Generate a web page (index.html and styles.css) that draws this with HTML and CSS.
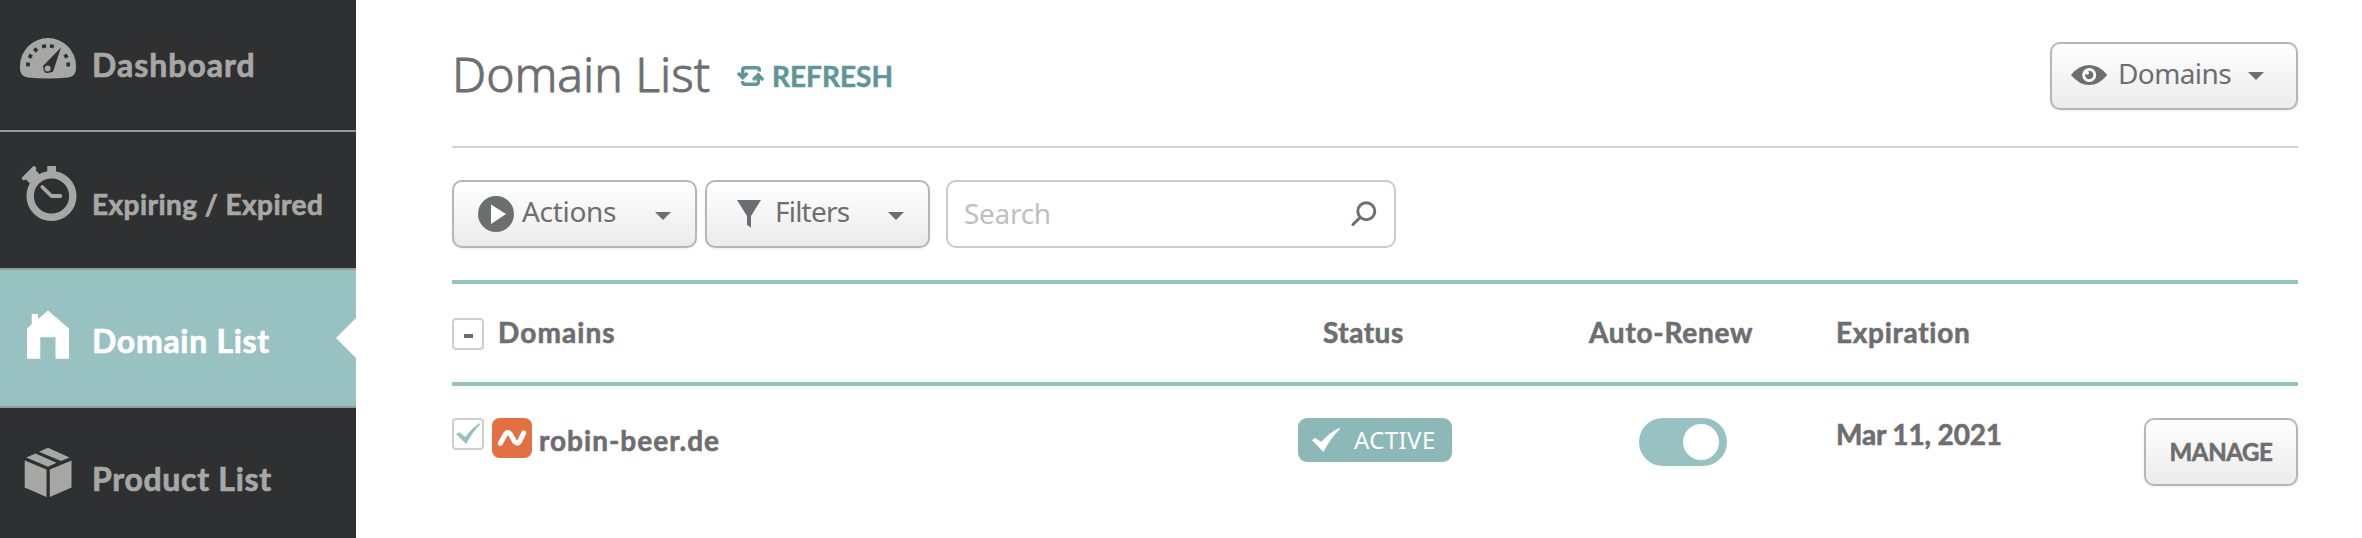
FILE: index.html
```html
<!DOCTYPE html>
<html lang="en">
<head>
<meta charset="utf-8">
<title>Domain List</title>
<link rel="stylesheet" href="styles.css">
</head>
<body>
<div class="app">
  <nav class="sidebar">
    <a class="nav-item nav-first">
      <svg class="nav-icon" width="92" height="130" viewBox="0 0 92 130">
        <path fill="#a7a8a6" d="M20 66a28 28 0 0 1 56 0v3q0 7-8 8.500q-20 2-40 0q-8-1.500-8-8.500z"/>
        <g fill="#2f3031">
          <path d="M26.300 62.200l3.700.5-.3 4-3.700-.6zM29.700 53.600l3.200 2-2 3.300-3.100-2zM35.500 47.300l3 2.700-2.900 2.700-2.600-2.900zM41.700 45l4-1 .7 3.500-4 1zM50.300 44l4 1-1.100 3.500-3.600-1zM63.300 55.600l3.100-2 2.300 3.200-3.200 2zM66.200 62.700l3.600-.5.400 4-3.600.5z"/>
          <path d="M61 47.500l-8 24.300q-3.500 1.500-8 1q-1.500-2-2-6.800z"/>
        </g>
        <circle cx="47.700" cy="68.500" r="2.900" fill="#a7a8a6"/>
      </svg>
      <span class="nav-label sp-10">Dashboard</span>
    </a>
    <a class="nav-item">
      <svg class="nav-icon" width="92" height="136" viewBox="0 132 92 136">
        <g fill="none" stroke="#a7a8a6">
          <circle cx="51.500" cy="196" r="21.300" stroke-width="7.400"/>
          <path stroke-width="3.800" stroke-linecap="round" stroke-linejoin="round" d="M42.300 187l9.200 9h8.800"/>
        </g>
        <path fill="#a7a8a6" d="M47.300 166H56v8h-8.700zM21.500 178l12.200-12.200 2.600 1.800-.5 2.700 4.400 4.700-9.400 9.400-4.800-4.800-2.700.8z"/>
      </svg>
      <span class="nav-label nav-small">Expiring / Expired</span>
    </a>
    <a class="nav-item nav-active">
      <svg class="nav-icon" width="92" height="136" viewBox="0 270 92 136">
        <path fill="#fff" d="M27 328.500l4.700-4.300V314H38v5l10-8.500 21 18v30.200H55.500v-21.400H40.300v21.400H27z"/>
      </svg>
      <span class="nav-label sp-7">Domain List</span>
    </a>
    <a class="nav-item">
      <svg class="nav-icon" width="92" height="136" viewBox="0 408 92 136">
        <path fill="#a7a8a6" d="M24.700 460.500l21.800 9V497l-21.800-9.500zM49.800 469.500l21.700-9v27L49.800 497zM26.300 457.500l9.200-4 21 9.200-8.500 4zM39 451.800l9-4 21.500 9.700-8.500 3.600z"/>
      </svg>
      <span class="nav-label sp-7">Product List</span>
    </a>
  </nav>

  <main class="main">
    <header class="page-head">
      <h1 class="title">Domain List</h1>
      <a class="refresh">
        <svg width="27" height="22" viewBox="737 65 27 22" fill="none" stroke="#5f9697" stroke-width="3.400">
          <path d="M742.700 77.500V70q0-2.300 2.300-2.300h12q2.300 0 2.300 2.300v1.500M738 73l4.700 4.700 4.800-4.700M742.700 81v1q0 2.300 2.300 2.300h11q2.300 0 2.300-2.300v-7.500M753.200 80l5.100-5.200 4.800 5.200"/>
        </svg>
        REFRESH
      </a>
      <button class="btn btn-view">
        <svg width="37" height="22" viewBox="2071 64 37 22">
          <path fill="#6d6e70" d="M2071 75q8-10 18.200-10t18 10q-8 10-18 10t-18.200-10z"/>
          <circle cx="2089.200" cy="75" r="7" fill="#fff"/>
          <circle cx="2089.200" cy="75" r="4.200" fill="#6d6e70"/>
          <circle cx="2087" cy="72.800" r="2" fill="#fff"/>
        </svg>
        <span class="btn-label lbl-domains">Domains</span>
        <i class="caret"></i>
      </button>
    </header>

    <div class="toolbar">
      <button class="btn btn-actions">
        <svg width="36" height="36" viewBox="0 0 36 36">
          <circle cx="18" cy="18" r="18" fill="#6d6e70"/>
          <path fill="#fff" d="M13 8.500l15 9.500-15 10z"/>
        </svg>
        <span class="btn-label lbl-actions">Actions</span>
        <i class="caret"></i>
      </button>
      <button class="btn btn-filters">
        <svg width="24" height="28" viewBox="0 0 24 28">
          <path fill="#6d6e70" d="M0 0h24L14 16v11.500L10 25v-9z"/>
        </svg>
        <span class="btn-label lbl-filters">Filters</span>
        <i class="caret"></i>
      </button>
      <div class="search">
        <span class="search-hint">Search</span>
        <svg width="26" height="26" viewBox="0 0 26 26" fill="none" stroke="#6d6e70">
          <circle cx="15.300" cy="10.300" r="8.500" stroke-width="3"/>
          <path d="M8.800 16.800L2 23.500" stroke-width="3" stroke-linecap="round"/>
        </svg>
      </div>
    </div>

    <section class="table">
      <div class="row thead">
        <div class="cell-name"><span class="check check-mixed"><i class="dash"></i></span><span class="th-domains">Domains</span></div>
        <div class="th-status">Status</div>
        <div class="th-renew">Auto-Renew</div>
        <div class="th-exp">Expiration</div>
      </div>
      <div class="row tbody">
        <div class="cell-name">
          <span class="check">
            <svg width="28" height="28" viewBox="454 420 28 28"><path fill="#98c1c1" d="M456 434l3.300-1.800 6 4.800q6.500-9 14.500-13.700l.6.900q-7.500 7.300-14.200 19.800z"/></svg>
          </span>
          <svg class="logo" width="40" height="40" viewBox="492 418 40 40">
            <rect x="492" y="418" width="40" height="40" rx="7.500" fill="#e27043"/>
            <path fill="none" stroke="#fff" stroke-width="5" stroke-linecap="round" stroke-linejoin="round" d="M500.300 443.500l5.400-9.800q1.800-2.400 4.600.3l4.600 7.900q2.600 2.800 4.600-.2l4.200-8.800"/>
          </svg>
          <span class="domain">robin-beer.de</span>
        </div>
        <div>
          <span class="badge">
            <svg width="28" height="25" viewBox="1312 428 28 25"><path fill="#fff" d="M1312 440.300l3-2.600 6.300 4.400q8-9.800 18-14.100l.7 1q-9.500 9-16.500 23z"/></svg>
            ACTIVE
          </span>
        </div>
        <div class="cell-renew"><span class="toggle"><i class="knob"></i></span></div>
        <div class="date">Mar 11, 2021</div>
        <button class="btn btn-manage">MANAGE</button>
      </div>
    </section>
  </main>
</div>
</body>
</html>
```

FILE: styles.css
```css
* { box-sizing: border-box; }

body {
  margin: 0;
  background: #fff;
  color: #6d6e70;
  font-family: Lato, "Noto Sans", sans-serif;
  font-size: 28px;
  line-height: 36px;
  overflow: hidden;
}

svg { display: block; flex: none; }

.app { display: flex; height: 538px; }

/* Sidebar */
.sidebar { width: 356px; flex: none; background: #2f3031; overflow: hidden; }
.nav-item {
  position: relative;
  display: flex;
  align-items: center;
  height: 138px;
  border-bottom: 2px solid #989998;
  color: #a7a8a6;
  font-size: 32px;
  font-weight: 700;
  white-space: nowrap;
}
.nav-first { height: 132px; }
.nav-label { padding-top: 5px; -webkit-text-stroke: .7px currentColor; }
.nav-first .nav-label { padding-top: 0; padding-bottom: 1px; }
.nav-small { font-size: 28px; letter-spacing: .45px; padding-top: 7px; }
.sp-10 { letter-spacing: 1px; }
.sp-7 { letter-spacing: .7px; }
.nav-active { background: #98c1c1; color: #fff; }
.nav-active::after {
  content: "";
  position: absolute;
  right: 0;
  top: 48px;
  border: 20px solid transparent;
  border-right-color: #fff;
  border-left-width: 0;
}

/* Main column */
.main { flex: 1; padding: 0 64px 0 96px; }
.page-head {
  display: flex;
  align-items: center;
  height: 148px;
  border-bottom: 2px solid #d5d5d5;
}
.title {
  margin: 0;
  padding-top: 2px;
  width: 285px;
  font: 300 48px/58px "Noto Sans", sans-serif;
  -webkit-text-stroke: .9px currentColor;
  white-space: nowrap;
}
.refresh {
  display: flex;
  align-items: center;
  gap: 8px;
  padding-top: 5px;
  color: #5f9697;
  font-weight: 700;
  -webkit-text-stroke: .5px currentColor;
}

.btn {
  display: flex;
  align-items: center;
  height: 68px;
  padding: 0;
  border: 2px solid #b6b6b6;
  border-radius: 10px;
  background: linear-gradient(#fff, #ebebeb);
  box-shadow: 0 1px 2px rgba(0, 0, 0, .08);
  color: #6d6e70;
  font: 400 28px/36px "Noto Sans", sans-serif;
}
.btn-label { padding-bottom: 6px; text-align: left; }
.caret {
  border: 8px solid transparent;
  border-top-color: #6d6e70;
  border-bottom-width: 0;
}
.btn-view { width: 248px; margin: 6px 0 0 auto; padding-left: 19px; }
.btn-view svg { margin-bottom: 2px; }
.lbl-domains { width: 130px; margin-left: 10px; letter-spacing: -.6px; }
.btn-actions { width: 245px; padding-left: 24px; }
.lbl-actions { width: 133px; margin-left: 8px; letter-spacing: -.3px; }
.btn-filters { width: 225px; margin-left: 8px; padding-left: 30px; }
.lbl-filters { width: 113px; margin-left: 14px; letter-spacing: -.8px; }
.btn-actions .caret, .btn-filters .caret { margin-top: 4px; }

.toolbar { display: flex; margin-top: 32px; }
.search {
  display: flex;
  align-items: center;
  justify-content: space-between;
  width: 450px;
  height: 68px;
  margin-left: 16px;
  padding: 0 17px 0 16px;
  border: 2px solid #cbcbcb;
  border-radius: 10px;
}
.search-hint {
  padding-bottom: 3px;
  color: #bfbfbf;
  font-family: "Noto Sans", sans-serif;
  letter-spacing: -.3px;
}

/* Table */
.table { margin-top: 32px; font-weight: 700; -webkit-text-stroke: .6px currentColor; }
.row { display: grid; grid-template-columns: 846px 291px 247px 1fr auto; }
.thead {
  height: 106px;
  align-items: center;
  padding-bottom: 2px;
  border-top: 4px solid #98c1c1;
  border-bottom: 4px solid #98c1c1;
}
.tbody { padding-top: 32px; align-items: start; }
.cell-name { display: flex; align-items: flex-start; }
.check {
  width: 32px;
  height: 32px;
  border: 2px solid #cfcfcf;
  border-radius: 4px;
}
.check-mixed { display: flex; align-items: center; justify-content: center; margin-top: 4px; }
.dash { width: 9px; height: 4px; margin-top: 4px; background: #6d6e70; }
.th-domains { margin-left: 14px; letter-spacing: 1.1px; }
.th-status { padding-left: 25px; letter-spacing: .5px; }
.th-renew { letter-spacing: .75px; }
.th-exp { letter-spacing: .7px; }
.logo { margin-left: 8px; }
.domain { margin-left: 7px; padding-top: 4px; letter-spacing: 1px; }
.badge {
  display: inline-flex;
  align-items: center;
  gap: 14px;
  width: 154px;
  height: 44px;
  padding-left: 14px;
  border-radius: 9px;
  background: #8cb8b8;
  color: #fff;
  font: 400 24px/40px "Noto Sans", sans-serif;
  letter-spacing: .4px;
  -webkit-text-stroke: 0;
  vertical-align: top;
}
.cell-renew { padding-left: 50px; }
.toggle {
  display: flex;
  align-items: center;
  justify-content: flex-end;
  width: 88px;
  height: 48px;
  padding-right: 8px;
  border-radius: 24px;
  background: #98c1c1;
}
.knob { width: 36px; height: 36px; border-radius: 50%; background: #fff; }
.date { margin-top: -2px; letter-spacing: -.15px; }
.btn-manage {
  width: 154px;
  justify-content: center;
  padding-bottom: 1px;
  font: 700 24px/36px Lato, sans-serif;
  letter-spacing: -.4px;
}
```
